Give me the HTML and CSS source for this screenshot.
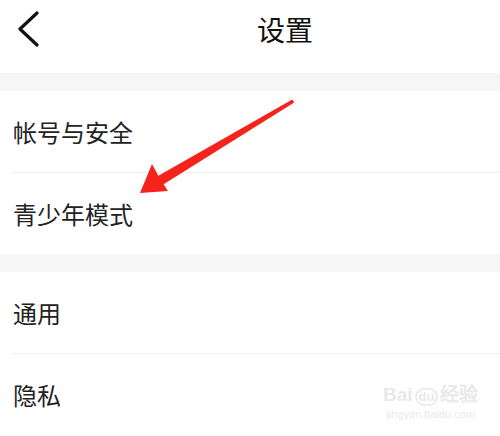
FILE: index.html
```html
<!DOCTYPE html>
<html lang="zh-CN">
<head>
  <meta charset="UTF-8">
  <meta name="viewport" content="width=device-width, initial-scale=1.0">
  <title>设置</title>
  <link rel="stylesheet" href="styles.css">
</head>
<body>
  <div class="page">
    <header class="topbar">
      <svg class="back" width="22" height="36" viewBox="0 0 22 36">
        <path d="M20 2 L3 18 L20 34" fill="none" stroke="#111" stroke-width="3.2" stroke-linecap="round" stroke-linejoin="round"/>
      </svg>
      <h1 class="title">设置</h1>
    </header>

    <div class="gap"></div>
    <ul class="group">
      <li class="row">帐号与安全</li>
      <li class="row">青少年模式</li>
    </ul>

    <div class="gap"></div>
    <ul class="group">
      <li class="row">通用</li>
      <li class="row">隐私</li>
    </ul>

    <!-- 标注箭头 -->
    <svg class="arrow" width="500" height="436" viewBox="0 0 500 436">
      <polygon points="140,193 152,164 158.4,175.7 292.3,99.6 294.2,102.4 163.6,184.3 168,191" fill="#f4231c"/>
    </svg>

    <div class="watermark">
      <div class="wm-logo">Bai<span class="wm-du">du</span>经验</div>
      <div class="wm-url">jingyan.baidu.com</div>
    </div>
  </div>
</body>
</html>
```

FILE: styles.css
```css
body {
  margin: 0;
  padding: 0;
  background: #fff;
  font-family: "Noto Sans CJK SC", "Noto Sans", sans-serif;
  color: #222;
}

.page {
  position: relative;
  width: 500px;
  height: 436px;
  overflow: hidden;
}

.topbar {
  height: 73px;
  box-sizing: border-box;
  padding: 0 0 15px 17px;
  display: flex;
  align-items: center;
}

.back {
  display: block;
  flex: none;
}

.title {
  flex: 1;
  margin: 0;
  padding-left: 31px;
  text-align: center;
  font-size: 28px;
  font-weight: 400;
  color: #111;
}

.gap {
  height: 18px;
  background-color: #f6f6f6;
}

.group {
  list-style: none;
  margin: 0;
  padding: 0;
}

.row {
  height: 81px;
  margin-left: 12px;
  padding-left: 1px;
  display: flex;
  align-items: center;
  font-size: 24px;
  color: #222;
}

.row + .row {
  border-top: 1px solid #efefef;
}

.arrow {
  position: absolute;
  top: 0;
  left: 0;
  pointer-events: none;
}

.watermark {
  position: absolute;
  left: 383px;
  top: 384px;
  color: #e9e9e9;
  text-align: center;
}

.wm-logo {
  font-family: "Liberation Sans", sans-serif;
  font-size: 19px;
  font-weight: 700;
  line-height: 22px;
}

.wm-du {
  display: inline-block;
  margin: 0 2px;
  padding: 0 2px;
  border: 2px solid #ececec;
  border-radius: 9px;
  font-size: 13px;
  line-height: 14px;
}

.wm-url {
  font-family: "Liberation Sans", sans-serif;
  font-size: 11px;
  line-height: 16px;
}
```
